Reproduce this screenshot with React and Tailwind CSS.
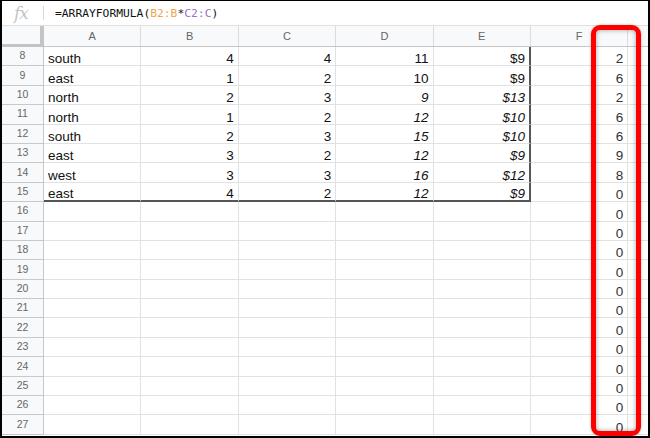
import React from 'react';

const cols = ['A', 'B', 'C', 'D', 'E', 'F', ''];

const data = [
    { n: 8, a: 'south', b: 4, c: 4, d: 11, e: '$9', f: 2 },
    { n: 9, a: 'east', b: 1, c: 2, d: 10, e: '$9', f: 6 },
    { n: 10, a: 'north', b: 2, c: 3, d: 9, e: '$13', f: 2, it: true },
    { n: 11, a: 'north', b: 1, c: 2, d: 12, e: '$10', f: 6, it: true },
    { n: 12, a: 'south', b: 2, c: 3, d: 15, e: '$10', f: 6, it: true },
    { n: 13, a: 'east', b: 3, c: 2, d: 12, e: '$9', f: 9, it: true },
    { n: 14, a: 'west', b: 3, c: 3, d: 16, e: '$12', f: 8, it: true },
    { n: 15, a: 'east', b: 4, c: 2, d: 12, e: '$9', f: 0, it: true },
];

const rows = [...data];
for (let i = 16; i <= 27; i++) rows.push({ n: i, f: 0, empty: true });

const Cell = ({ children, right, italic, className = '' }) => (
    <div
        className={`w-[97.4px] shrink-0 h-full flex items-end px-[4px] border-r border-[#e2e2e2] ${right ? 'justify-end' : 'justify-start'} ${italic ? 'italic' : ''} ${className}`}
    >
        <span className="leading-[12px] whitespace-nowrap">{children}</span>
    </div>
);

const App = () => {
    return (
        <div className="relative w-[650px] h-[438px] overflow-hidden bg-white border-t border-x-2 border-b-2 border-black font-['Liberation_Sans',Arial,sans-serif]">
            {/* formula bar */}
            <div className="h-[25px] flex items-center border-b border-[#e0e0e0]">
                <div className="w-[42px] flex items-center">
                    <span className="ml-[12px] text-[17px] italic text-[#c4c4c4] leading-none font-['DejaVu_Serif',serif] tracking-[-1px]">fx</span>
                    <span className="ml-auto w-px h-[14px] bg-[#d8d8d8]" />
                </div>
                <div className="ml-[11px] text-[11.3px] font-['DejaVu_Sans_Mono',monospace] text-[#111] leading-none pt-[2px]">
                    =ARRAYFORMULA(<span className="text-[#f2a34b]">B2:B</span>*<span className="text-[#9b6fcf]">C2:C</span>)
                </div>
            </div>

            {/* column headers */}
            <div className="h-[21px] flex bg-[#f8f9fa] border-b border-[#c6c6c6]">
                <div className="w-[42px] shrink-0 h-[22px] bg-[#f8f9fa] border-r-4 border-b-4 border-[#c4c4c4]" />
                {cols.map((c, i) => (
                    <div key={i} className="w-[97.4px] shrink-0 flex items-center justify-center border-r border-[#dcdcdc] text-[11px] text-[#666]">
                        {c}
                    </div>
                ))}
            </div>

            {/* rows */}
            {rows.map((r) => {
                const last = r.n === 15;
                const inData = !r.empty;
                const bottom = `border-b ${last ? 'border-b-2 border-b-[#555]' : 'border-b-[#e2e2e2]'}`;
                return (
                    <div key={r.n} className="h-[19.4px] flex text-[13.5px] text-[#111]">
                        <div className="w-[42px] shrink-0 flex items-center justify-center bg-[#f8f9fa] border-r border-b border-[#c8c8c8] text-[10.5px] text-[#666]">
                            {r.n}
                        </div>
                        <Cell className={bottom}>{r.a}</Cell>
                        <Cell right className={bottom}>{r.b}</Cell>
                        <Cell right className={bottom}>{r.c}</Cell>
                        <Cell right italic={r.it} className={bottom}>{r.d}</Cell>
                        <Cell right italic={r.it} className={`${bottom} ${inData ? 'border-r-2 border-r-[#555]' : ''}`}>{r.e}</Cell>
                        <Cell right className="border-b border-b-[#e2e2e2] text-[#333]">{r.f}</Cell>
                        <Cell className="border-b border-b-[#e2e2e2]" />
                    </div>
                );
            })}

            {/* red highlight */}
            <div className="absolute left-[589px] top-[24px] w-[50px] h-[411px] rounded-[9px] border-[5px] border-[#ff0000] shadow-[inset_0_0_5px_rgba(0,0,0,0.35),0_0_3px_rgba(0,0,0,0.25)]" />
        </div>
    );
};

export default App;
